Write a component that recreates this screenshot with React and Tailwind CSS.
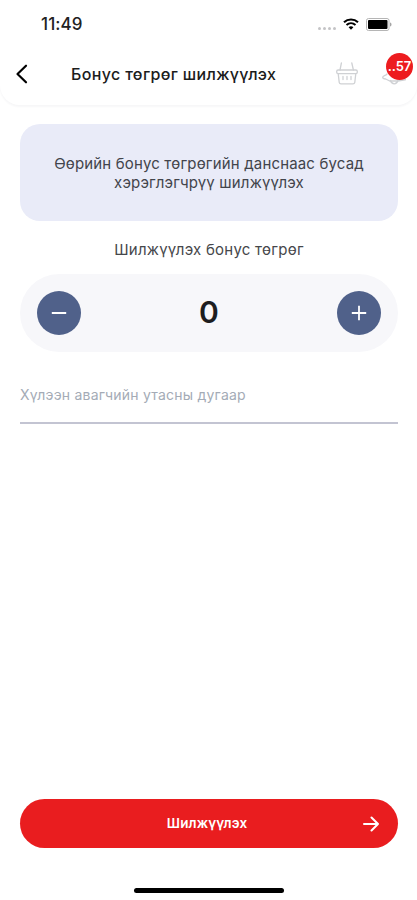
import { useState } from "react";

const StatusBar = () => (
  <div className="flex h-12 items-center justify-between pr-[25px] pl-[41px] text-black">
    <span className="text-[17px] leading-5 font-medium tracking-[0.1px] text-[#222]">11:49</span>
    <div className="flex items-center">
      <div className="mt-[9px] mr-[7px] flex gap-[2px]">
        {[0, 1, 2, 3].map((dot) => (
          <span key={dot} className="h-[3px] w-[3px] rounded-full bg-[#c4c4c6]" />
        ))}
      </div>
      <svg className="mr-[7px] h-3 w-4" viewBox="0 0 16 12" fill="none" stroke="currentColor">
        <path d="M1 4.3C5 .6 11 .6 15 4.3" strokeWidth="2.1" />
        <path d="M3.5 7C6.1 4.7 9.9 4.7 12.5 7" strokeWidth="2" />
        <path d="M8 11.7 5.6 9.2c1.3-1.2 3.5-1.2 4.8 0Z" fill="currentColor" stroke="none" />
      </svg>
      <svg className="h-[13px] w-[26px]" viewBox="0 0 26 13">
        <rect x=".5" y=".5" width="22.5" height="12" rx="2" fill="#fff" stroke="#b5b5b5" />
        <rect x="2" y="2" width="19.5" height="9" rx="1" fill="#000" />
        <path d="M24 4.5c2 .6 2 3.4 0 4Z" fill="#a5a5a5" />
      </svg>
    </div>
  </div>
);

const BasketIcon = () => (
  <svg
    className="h-6 w-6"
    viewBox="0 0 24 24"
    fill="none"
    stroke="#cfd1d4"
    strokeWidth="1.3"
    strokeLinecap="round"
    strokeLinejoin="round"
  >
    <path d="M6.400 1 5 8M16.800 1l1.600 7" />
    <rect x="1.7" y="8" width="20.6" height="3.600" rx="1.4" />
    <path d="m3.2 11.600 1 8.700c.2 1 .8 1.500 1.800 1.500h12c1 0 1.600-.5 1.800-1.500l1-8.700" />
    <path d="M8 14.500v3M12 14.500v3M16 14.500v3" />
  </svg>
);

const BellIcon = () => (
  <svg
    className="h-6 w-6"
    viewBox="0 0 24 24"
    fill="none"
    stroke="#cfd1d4"
    strokeWidth="1.3"
    strokeLinecap="round"
    strokeLinejoin="round"
  >
    <path d="M5 12c-.3 1.500-4.300 1.500-4.300 3.300 0 1.200 1.300 1.700 3 1.700l4 2h8l6-1c1.700 0 2.800-.5 2.800-1.700 0-1.800-3-2.300-3.300-4.300" />
    <path d="M8.500 18.500c.6 2 2 3.300 3.800 3.300s3-1.300 3.500-3.300" />
  </svg>
);

const Header = () => (
  <header className="h-[105px] rounded-b-[20px] bg-white shadow-[0_2px_2px_rgba(30,30,60,0.035)]">
    <StatusBar />
    <div className="flex h-[52px] items-center pl-[15px]">
      <button aria-label="Буцах" className="mr-[42px]">
        <svg
          className="h-5 w-[14px]"
          viewBox="0 0 14 20"
          fill="none"
          stroke="#000"
          strokeWidth="2.2"
          strokeLinecap="round"
          strokeLinejoin="round"
        >
          <path d="M11 1.700 2.500 10l8.500 8.300" />
        </svg>
      </button>
      <h1 className="w-[205px] text-[16px] leading-5 font-medium tracking-[0.35px] whitespace-nowrap text-[#1c1c1c]">
        Бонус төгрөг шилжүүлэх
      </h1>
      <div className="ml-[59px] flex gap-[23px]">
        <BasketIcon />
        <div className="relative">
          <BellIcon />
          <span className="absolute -top-[9px] left-[4px] flex h-[27px] w-[27px] items-center justify-center rounded-full bg-[#ed1c1f] text-[13px] font-semibold tracking-[-0.1px] text-white">
            ..57
          </span>
        </div>
      </div>
    </div>
  </header>
);

const App = () => {
  const [amount, setAmount] = useState(0);

  return (
    <div className="flex h-[900px] w-[417px] flex-col overflow-hidden bg-white font-['Inter','Liberation_Sans',sans-serif]">
      <Header />

      <main className="flex flex-1 flex-col pt-[19px] pr-[19px] pl-5">
        <div className="flex h-[97px] items-center justify-center rounded-[20px] bg-[#e9ebf8] text-center text-[15px] leading-[19px] tracking-[0.16px] whitespace-nowrap text-[#42444b]">
          <p>
            Өөрийн бонус төгрөгийн данснаас бусад
            <br />
            хэрэглэгчрүү шилжүүлэх
          </p>
        </div>

        <p className="mt-[19px] text-center text-[15px] leading-5 tracking-[0.24px] whitespace-nowrap text-[#46474b]">
          Шилжүүлэх бонус төгрөг
        </p>

        {/* Amount stepper */}
        <div className="mt-[14px] flex h-[78px] items-center justify-between rounded-full bg-[#f7f7fa] px-[17px]">
          <button
            aria-label="Хасах"
            onClick={() => setAmount(Math.max(0, amount - 1))}
            className="flex h-11 w-11 items-center justify-center rounded-full bg-[#50618a]"
          >
            <svg className="h-4 w-4" viewBox="0 0 16 16" stroke="#fff" strokeWidth="2">
              <path d="M.8 8h14.400" />
            </svg>
          </button>
          <span className="pb-[2px] text-[30px] leading-none font-semibold text-[#1d1d1f]">{amount}</span>
          <button
            aria-label="Нэмэх"
            onClick={() => setAmount(amount + 1)}
            className="flex h-11 w-11 items-center justify-center rounded-full bg-[#50618a]"
          >
            <svg className="h-4 w-4" viewBox="0 0 16 16" stroke="#fff" strokeWidth="1.800">
              <path d="M.8 8h14.400M8 .8v14.400" />
            </svg>
          </button>
        </div>

        <input
          type="tel"
          placeholder="Хүлээн авагчийн утасны дугаар"
          className="mt-[14px] h-[58px] border-b-2 border-[#c3c4d2] text-[14px] tracking-[0.22px] outline-none placeholder:text-[#a4abb6]"
        />

        <button className="mt-auto mb-[40px] flex h-[49px] items-center rounded-full bg-[#e91d1f] pr-[19px] pl-[31px] text-white">
          <span className="flex-1 text-center text-[13.500px] font-semibold tracking-[0.1px]">
            Шилжүүлэх
          </span>
          <svg
            className="h-4 w-4"
            viewBox="0 0 16 16"
            fill="none"
            stroke="currentColor"
            strokeWidth="2"
            strokeLinecap="round"
            strokeLinejoin="round"
          >
            <path d="M1 8h14M8.500 1.500 15 8l-6.500 6.500" />
          </svg>
        </button>
      </main>

      {/* Home indicator */}
      <div className="mb-[7px] h-[5px] w-[150px] self-center rounded-full bg-black" />
    </div>
  );
};

export default App;
